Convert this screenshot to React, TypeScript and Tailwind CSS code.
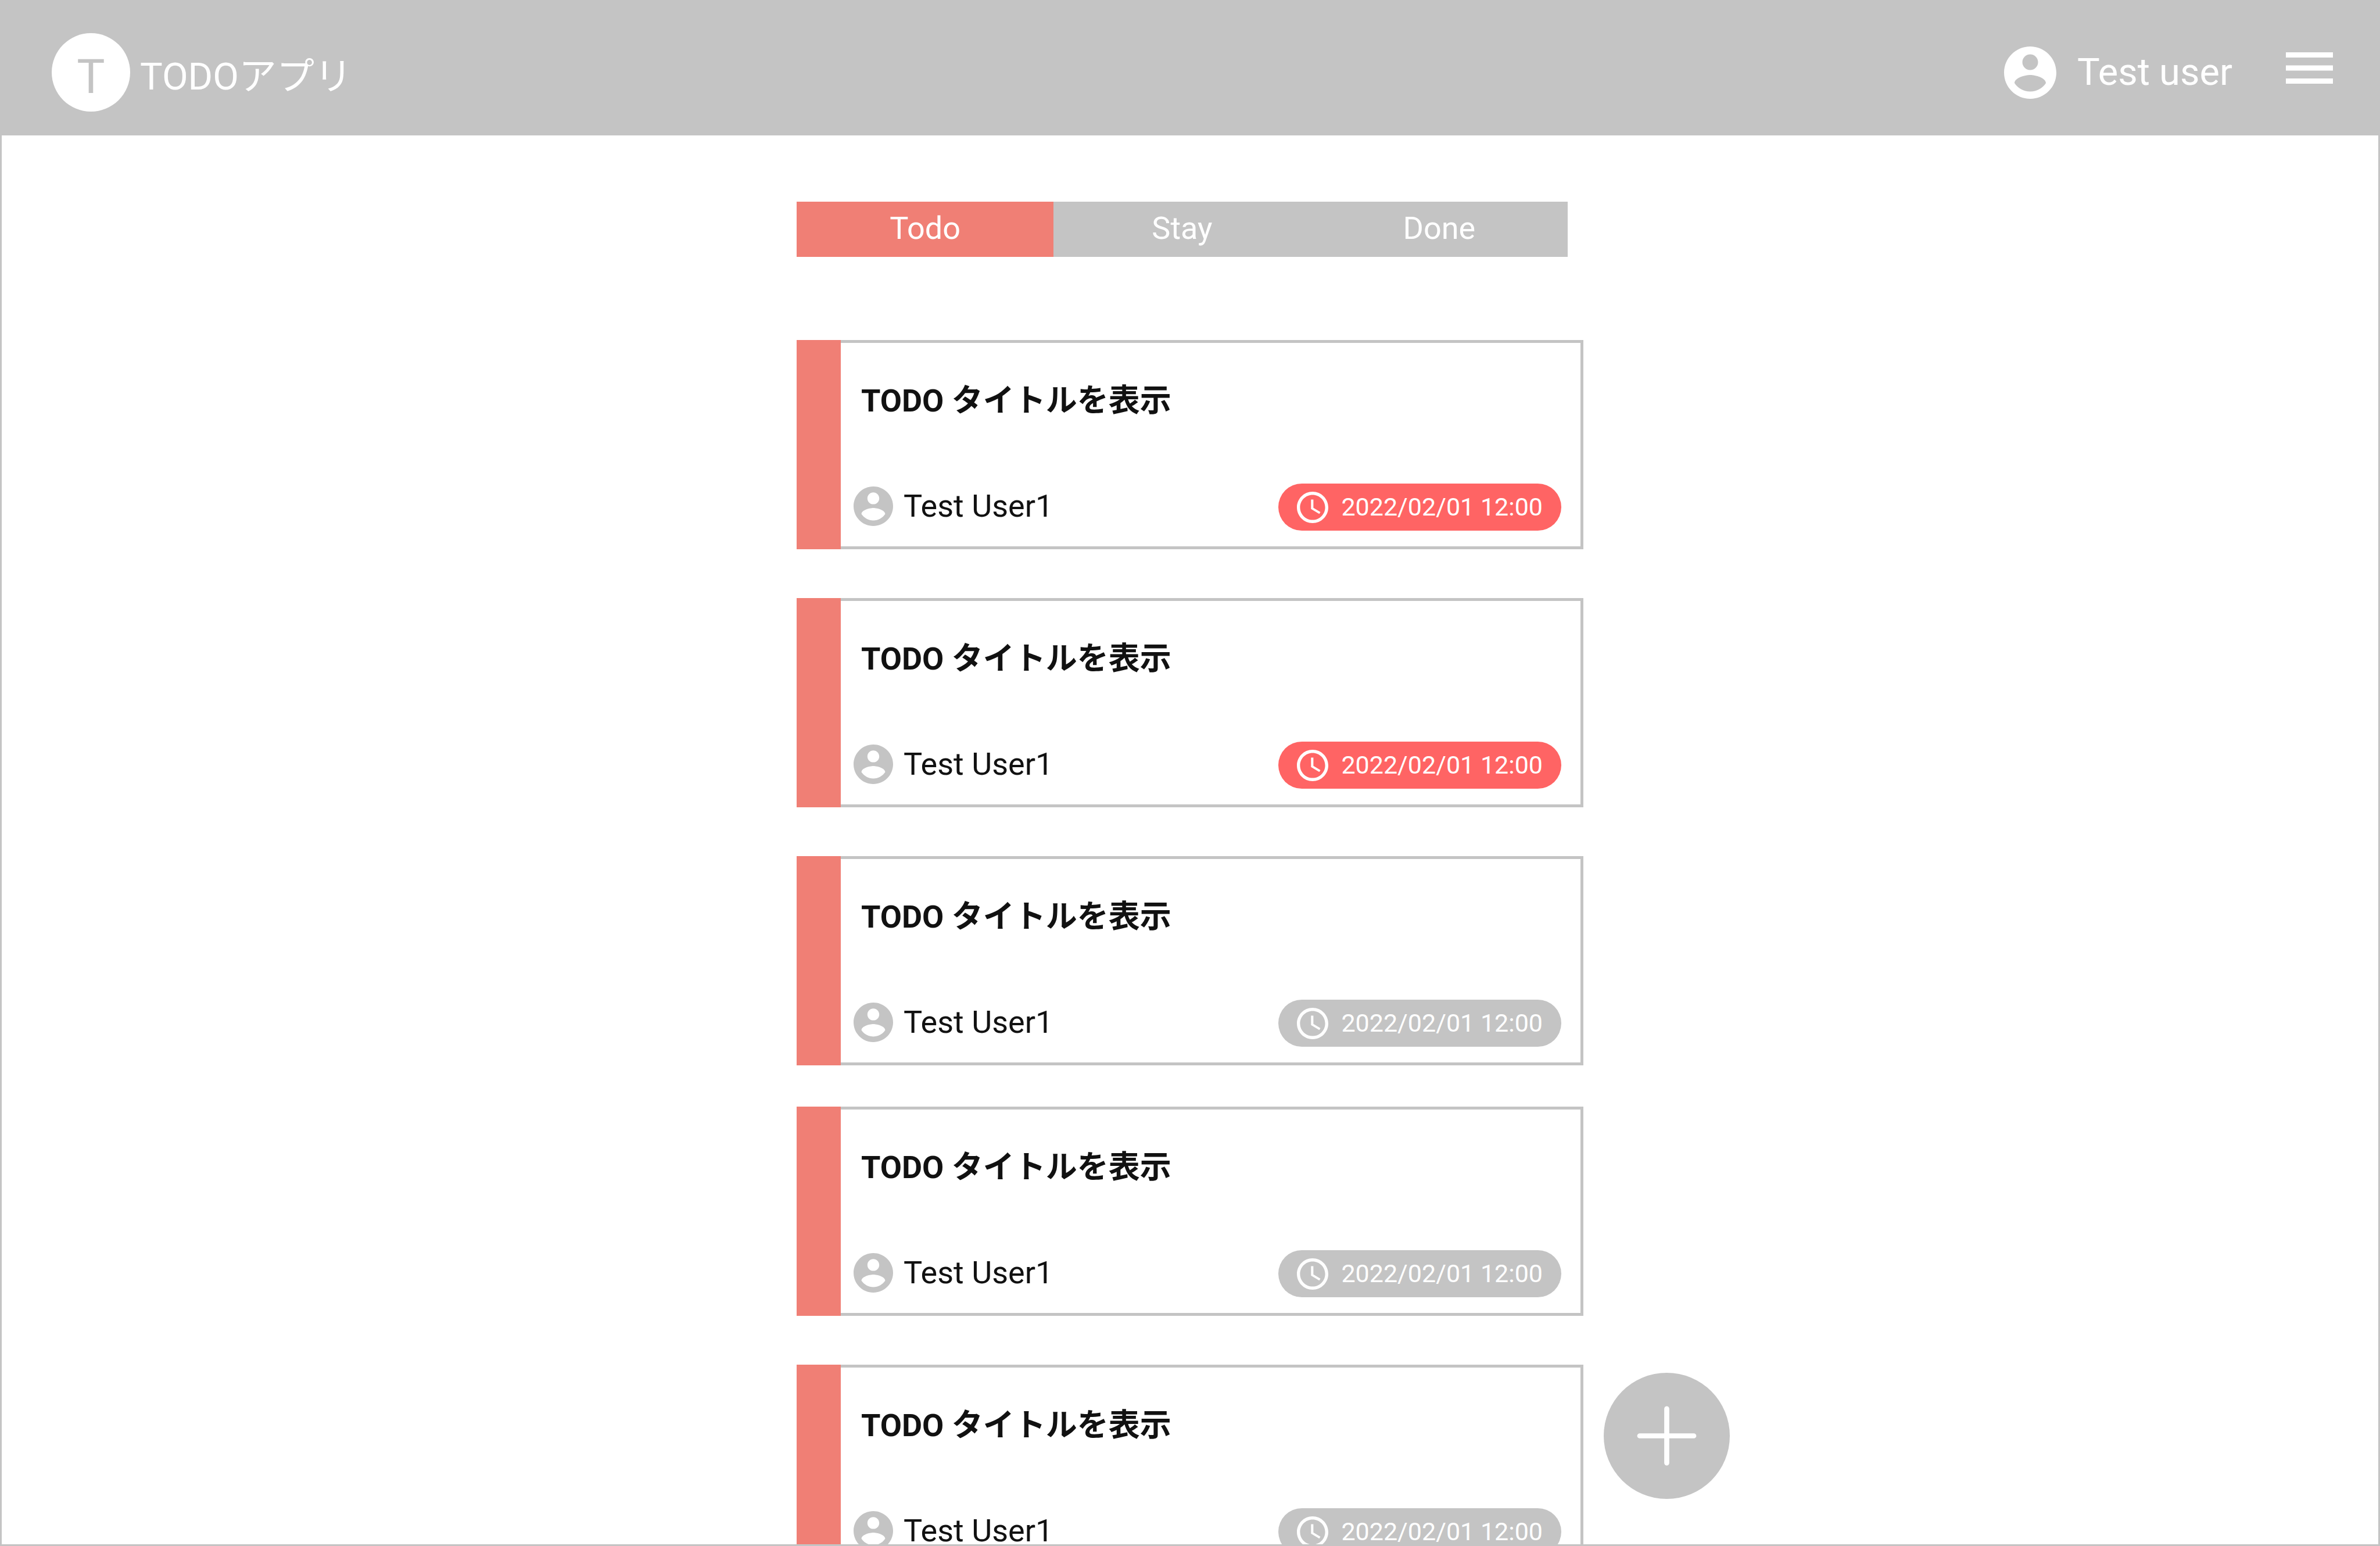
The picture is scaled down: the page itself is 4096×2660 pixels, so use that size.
import { useState } from "react";

const tabs = ["Todo", "Stay", "Done"];

const todos = [
  { id: 1, title: "TODO タイトルを表示", user: "Test User1", due: "2022/02/01 12:00", overdue: true, spacing: "mb-[84px]" },
  { id: 2, title: "TODO タイトルを表示", user: "Test User1", due: "2022/02/01 12:00", overdue: true, spacing: "mb-[84px]" },
  { id: 3, title: "TODO タイトルを表示", user: "Test User1", due: "2022/02/01 12:00", overdue: false, spacing: "mb-[71px]" },
  { id: 4, title: "TODO タイトルを表示", user: "Test User1", due: "2022/02/01 12:00", overdue: false, spacing: "mb-[84px]" },
  { id: 5, title: "TODO タイトルを表示", user: "Test User1", due: "2022/02/01 12:00", overdue: false, spacing: "mb-[84px]" },
];

function AccountIcon({ className }: { className: string }) {
  return (
    <svg viewBox="2 2 20 20" fill="currentColor" className={className} aria-hidden="true">
      <path d="M12 2C6.48 2 2 6.48 2 12s4.48 10 10 10 10-4.48 10-10S17.52 2 12 2zm0 3c1.66 0 3 1.34 3 3s-1.34 3-3 3-3-1.34-3-3 1.34-3 3-3zm0 14.2c-2.5 0-4.71-1.28-6-3.22.03-1.99 4-3.08 6-3.08 1.99 0 5.97 1.09 6 3.08-1.29 1.94-3.5 3.22-6 3.22z" />
    </svg>
  );
}

function ClockIcon() {
  return (
    <svg viewBox="2 2 20 20" fill="currentColor" className="size-[54px] shrink-0" aria-hidden="true">
      <path d="M11.99 2C6.47 2 2 6.48 2 12s4.47 10 9.99 10C17.52 22 22 17.52 22 12S17.52 2 11.99 2zM12 20c-4.42 0-8-3.58-8-8s3.58-8 8-8 8 3.58 8 8-3.58 8-8 8z" />
      <path d="M12.5 7H11v6l5.25 3.15.75-1.23-4.5-2.67z" />
    </svg>
  );
}

function Header() {
  return (
    <header className="flex items-center justify-between bg-[#c4c4c4] pt-[54px] pr-[78px] pb-[41px] pl-[86px] text-white">
      <a href="#" className="flex items-center gap-[17px]">
        <span className="flex size-[135px] items-center justify-center rounded-full bg-white pt-4 text-[81px] leading-none text-[#c4c4c4]">
          T
        </span>
        <span className="pt-4 text-[65px] leading-none">TODOアプリ</span>
      </a>
      <div className="flex items-center">
        <AccountIcon className="size-[90px]" />
        <span className="ml-[36px] text-[65px] leading-none">Test user</span>
        <button type="button" aria-label="Menu" className="mb-4 ml-[92px]">
          <svg viewBox="3 6 18 12" fill="currentColor" className="h-[54px] w-[81px]" aria-hidden="true">
            <path d="M3 18h18v-2H3v2zm0-5h18v-2H3v2zm0-7v2h18V6H3z" />
          </svg>
        </button>
      </div>
    </header>
  );
}

function TodoCard({ todo }: { todo: (typeof todos)[number] }) {
  return (
    <li className={`flex shrink-0 ${todo.spacing}`}>
      <div className="w-[76px] shrink-0 bg-[#f07f75]" />
      <div className="flex-1 border-y-5 border-r-5 border-[#c4c4c4] pt-[60px] pr-[33px] pb-[27px] pl-[22px]">
        <h2 className="pl-[13px] text-[54px] leading-[80px] font-bold">{todo.title}</h2>
        <div className="mt-[102px] flex items-center justify-between">
          <div className="flex items-center gap-[18px] pb-1">
            <AccountIcon className="size-[68px] text-[#c4c4c4]" />
            <span className="text-[54px] leading-none">{todo.user}</span>
          </div>
          <div
            className={`flex h-[81px] items-center gap-[22px] rounded-full px-[32px] text-white ${
              todo.overdue ? "bg-[#ff6464]" : "bg-[#c4c4c4]"
            }`}
          >
            <ClockIcon />
            <time className="text-[43px] leading-none">{todo.due}</time>
          </div>
        </div>
      </div>
    </li>
  );
}

export default function App() {
  const [active, setActive] = useState("Todo");

  return (
    <div
      lang="ja"
      className="flex h-screen flex-col overflow-hidden border-3 border-[#c4c4c4] bg-white font-['Roboto','Noto_Sans_CJK_JP',sans-serif] text-[#111111]"
    >
      <Header />
      <main className="mx-auto flex min-h-0 w-full max-w-[1354px] flex-1 flex-col pt-[114px]">
        <div role="tablist" className="mr-[27px] grid shrink-0 grid-cols-3">
          {tabs.map((tab) => (
            <button
              key={tab}
              type="button"
              role="tab"
              aria-selected={active === tab}
              onClick={() => setActive(tab)}
              className={`h-[95px] pb-1 text-[54px] leading-none text-white ${
                active === tab ? "bg-[#f07f75]" : "bg-[#c4c4c4]"
              }`}
            >
              {tab}
            </button>
          ))}
        </div>
        <ul className="mt-[143px] flex flex-col">
          {todos.map((todo) => (
            <TodoCard key={todo.id} todo={todo} />
          ))}
        </ul>
      </main>
      <button
        type="button"
        aria-label="Add todo"
        className="fixed bottom-[81px] left-1/2 ml-[712px] size-[217px] rounded-full bg-[#c4c4c4] text-white"
      >
        <svg viewBox="0 0 240 240" fill="none" stroke="currentColor" strokeWidth="9.6" strokeLinecap="round" className="size-full" aria-hidden="true">
          <path d="M120 68.5v103M68.5 120h103" />
        </svg>
      </button>
    </div>
  );
}
